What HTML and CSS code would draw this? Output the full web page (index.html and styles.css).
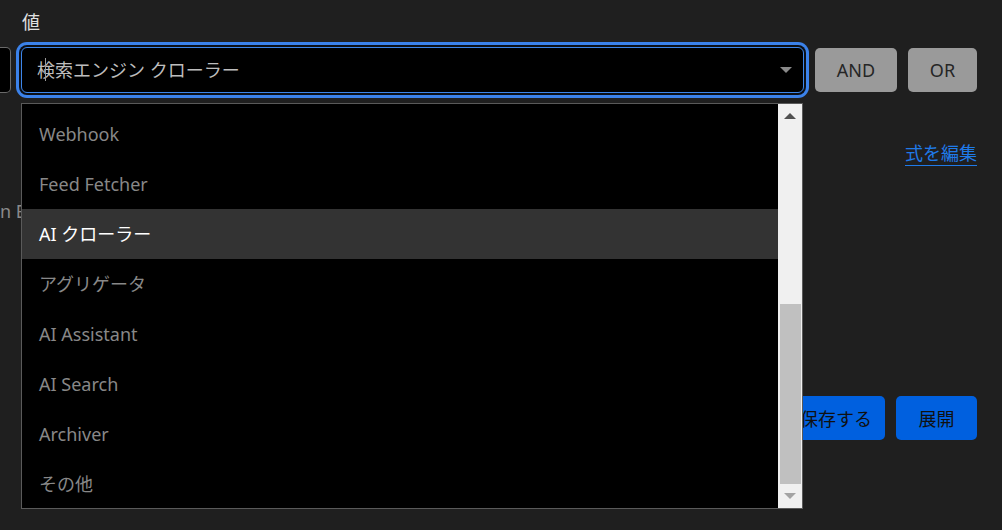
FILE: index.html
```html
<!DOCTYPE html>
<html lang="ja">
<head>
<meta charset="utf-8">
<link rel="stylesheet" href="styles.css">
</head>
<body>
<div class="page">
  <div class="field-label">値</div>
  <div class="cond-row">
    <div class="stub"></div>
    <div class="combo-wrap">
      <div class="combo">
        <span class="combo-text">検索エンジン クローラー</span>
        <span class="caret"></span>
        <span class="combo-arrow"></span>
      </div>
      <div class="dropdown">
        <div class="list">
          <div class="list-inner">
            <div class="item">Webhook</div>
            <div class="item">Feed Fetcher</div>
            <div class="item active">AI クローラー</div>
            <div class="item">アグリゲータ</div>
            <div class="item">AI Assistant</div>
            <div class="item">AI Search</div>
            <div class="item">Archiver</div>
            <div class="item">その他</div>
          </div>
        </div>
        <div class="scrollbar">
          <div class="sb-btn"><span class="tri-up"></span></div>
          <div class="sb-track"><div class="sb-thumb"></div></div>
          <div class="sb-btn"><span class="tri-down"></span></div>
        </div>
      </div>
    </div>
    <button class="op-btn and">AND</button>
    <button class="op-btn or">OR</button>
  </div>
  <div class="link-row"><a class="edit-link">式を編集</a></div>
  <div class="hidden-text">n E</div>
  <div class="actions">
    <button class="primary save">保存する</button>
    <button class="primary deploy">展開</button>
  </div>
</div>
</body>
</html>
```

FILE: styles.css
```css
* { box-sizing: border-box; }
html, body { margin: 0; padding: 0; }
body {
  background: #1f1f1f;
  width: 1002px;
  height: 530px;
  overflow: hidden;
  font-family: "Noto Sans", "Noto Sans CJK JP", sans-serif;
  font-size: 18px;
  color: #dcdcdc;
}
.page {
  padding: 0 25px 0 0;
}
.field-label {
  padding: 9px 0 0 22px;
  height: 43px;
  line-height: 26px;
  color: #e0e0e0;
}
.cond-row {
  display: flex;
  align-items: center;
  height: 54px;
}
.stub {
  width: 11px;
  height: 46px;
  border: 1px solid #6a6a6a;
  border-left: none;
  border-radius: 0 5px 5px 0;
  background: #000;
  margin-right: 10px;
}
.combo-wrap {
  position: relative;
  width: 783px;
  margin-right: 11px;
}
.combo {
  position: relative;
  height: 46px;
  background: #000;
  border: 1px solid #3d86ea;
  border-radius: 6px;
  box-shadow: 0 0 0 2px #0b0f16, 0 0 0 5px #3b82ea;
  display: flex;
  align-items: center;
  padding: 0 11px 0 15px;
}
.combo-text {
  flex: 1;
  color: #bdbdbd;
  line-height: 24px;
}
.caret {
  position: absolute;
  left: 23px;
  top: 10px;
  width: 1px;
  height: 23px;
  background: #9a9a9a;
}
.combo-arrow {
  width: 0;
  height: 0;
  border-left: 6px solid transparent;
  border-right: 6px solid transparent;
  border-top: 6px solid #8a8a8a;
}
.dropdown {
  position: absolute;
  top: 56px;
  left: 0;
  width: 782px;
  height: 406px;
  background: #000;
  border: 1px solid #5a5a5a;
  display: flex;
  z-index: 5;
}
.list {
  flex: 1;
  overflow: hidden;
}
.list-inner {
  padding-top: 5px;
}
.item {
  height: 50px;
  line-height: 50px;
  padding-left: 17px;
  color: #888888;
  white-space: nowrap;
}
.item.active {
  background: #333333;
  color: #ffffff;
}
.scrollbar {
  width: 24px;
  background: #f0f0f0;
  display: flex;
  flex-direction: column;
}
.sb-btn {
  height: 24px;
  display: flex;
  align-items: center;
  justify-content: center;
}
.tri-up {
  width: 0; height: 0;
  border-left: 6px solid transparent;
  border-right: 6px solid transparent;
  border-bottom: 6px solid #505050;
}
.tri-down {
  width: 0; height: 0;
  border-left: 6px solid transparent;
  border-right: 6px solid transparent;
  border-top: 6px solid #a3a3a3;
}
.sb-track {
  flex: 1;
  display: flex;
  flex-direction: column;
  justify-content: flex-end;
}
.sb-thumb {
  height: 180px;
  margin: 0 1px 0 2px;
  background: #c0c0c0;
}
.op-btn {
  height: 44px;
  border: none;
  border-radius: 5px;
  background: #9a9a9a;
  color: #262626;
  font-family: "Noto Sans", sans-serif;
  font-size: 18px;
  padding: 0;
}
.op-btn.and { width: 82px; margin-right: 11px; }
.op-btn.or { width: 69px; }
.link-row {
  display: flex;
  justify-content: flex-end;
  margin-top: 44px;
}
.edit-link {
  color: #1f7ae8;
  line-height: 24px;
  border-bottom: 1px solid #1f7ae8;
}
.hidden-text {
  margin-top: 32px;
  margin-left: 0;
  color: #8a8a8a;
  line-height: 26px;
}
.actions {
  display: flex;
  justify-content: flex-end;
  gap: 11px;
  margin-top: 172px;
}
.primary {
  height: 44px;
  border: none;
  border-radius: 5px;
  background: #0060df;
  color: #101010;
  font-family: "Noto Sans", "Noto Sans CJK JP", sans-serif;
  font-size: 18px;
  padding: 0;
}
.primary.save { width: 98px; }
.primary.deploy { width: 81px; }
```
